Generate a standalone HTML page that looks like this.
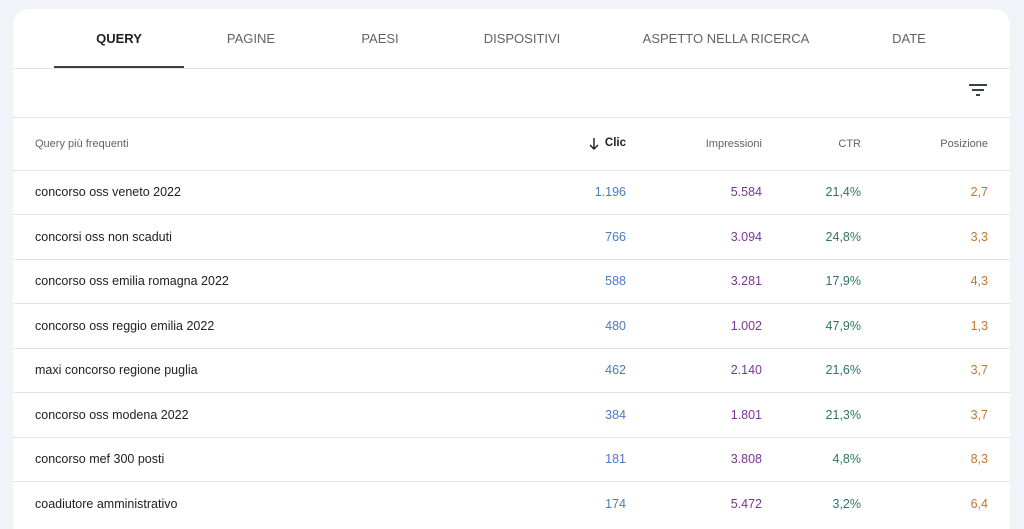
<!DOCTYPE html>
<html><head><meta charset="utf-8"><style>
body{margin:0;width:1024px;height:519px;background:#f1f3f8;font-family:"Liberation Sans",Arial,sans-serif;overflow:hidden;position:relative}
.card{position:absolute;left:13px;top:9px;width:997px;height:520px;background:#fff;border-radius:16px 16px 0 0}
.tab{position:absolute;top:22px;font-size:13px;color:#5f6368;transform:translateX(-50%);white-space:nowrap}
.ul{position:absolute;left:41px;top:57px;width:130px;height:2px;background:#3c4043}
.hl{position:absolute;left:0;width:997px;height:1px;background:#e3e4e6}
.t{position:absolute;font-size:12.5px;white-space:nowrap}
.r{transform:translateX(-100%)}
</style></head><body>
<div class="card">
<div class="tab" style="left:106px;color:#202124;font-weight:bold">QUERY</div>
<div class="tab" style="left:238px">PAGINE</div>
<div class="tab" style="left:367px">PAESI</div>
<div class="tab" style="left:509px">DISPOSITIVI</div>
<div class="tab" style="left:713px">ASPETTO NELLA RICERCA</div>
<div class="tab" style="left:896px">DATE</div>
<div class="ul"></div>
<div class="hl" style="top:59px"></div>
<svg style="position:absolute;left:956px;top:75px" width="18" height="12"><path d="M0 1h18M3 6h12M7 11h4" stroke="#3c4043" stroke-width="2"/></svg>
<div class="hl" style="top:108px"></div>
<div class="t" style="left:22px;top:129px;font-size:11px;color:#5f6368">Query più frequenti</div>
<svg style="position:absolute;left:576px;top:129px" width="10" height="12"><path d="M5 0v11M1 7l4 4 4-4" stroke="#202124" stroke-width="1.4" fill="none"/></svg>
<div class="t r" style="left:613px;top:128px;font-size:11.5px;color:#202124;font-weight:bold">Clic</div>
<div class="t r" style="left:749px;top:129px;font-size:11px;color:#5f6368">Impressioni</div>
<div class="t r" style="left:848px;top:129px;font-size:11px;color:#5f6368">CTR</div>
<div class="t r" style="left:975px;top:129px;font-size:11px;color:#5f6368">Posizione</div>
<div class="hl" style="top:161px"></div>
</div>
<div style="position:absolute;left:13px;top:9px">
<div class="t" style="left:22px;top:176px;color:#202124">concorso oss veneto 2022</div><div class="t r" style="left:613px;top:176px;color:#4a7cbf">1.196</div><div class="t r" style="left:749px;top:176px;color:#7b3596">5.584</div><div class="t r" style="left:848px;top:176px;color:#2f7468">21,4%</div><div class="t r" style="left:975px;top:176px;color:#c2772f">2,7</div>
<div class="hl" style="top:205px"></div>
<div class="t" style="left:22px;top:221px;color:#202124">concorsi oss non scaduti</div><div class="t r" style="left:613px;top:221px;color:#4a7cbf">766</div><div class="t r" style="left:749px;top:221px;color:#7b3596">3.094</div><div class="t r" style="left:848px;top:221px;color:#2f7468">24,8%</div><div class="t r" style="left:975px;top:221px;color:#c2772f">3,3</div>
<div class="hl" style="top:250px"></div>
<div class="t" style="left:22px;top:265px;color:#202124">concorso oss emilia romagna 2022</div><div class="t r" style="left:613px;top:265px;color:#4a7cbf">588</div><div class="t r" style="left:749px;top:265px;color:#7b3596">3.281</div><div class="t r" style="left:848px;top:265px;color:#2f7468">17,9%</div><div class="t r" style="left:975px;top:265px;color:#c2772f">4,3</div>
<div class="hl" style="top:294px"></div>
<div class="t" style="left:22px;top:310px;color:#202124">concorso oss reggio emilia 2022</div><div class="t r" style="left:613px;top:310px;color:#4a7cbf">480</div><div class="t r" style="left:749px;top:310px;color:#7b3596">1.002</div><div class="t r" style="left:848px;top:310px;color:#2f7468">47,9%</div><div class="t r" style="left:975px;top:310px;color:#c2772f">1,3</div>
<div class="hl" style="top:339px"></div>
<div class="t" style="left:22px;top:354px;color:#202124">maxi concorso regione puglia</div><div class="t r" style="left:613px;top:354px;color:#4a7cbf">462</div><div class="t r" style="left:749px;top:354px;color:#7b3596">2.140</div><div class="t r" style="left:848px;top:354px;color:#2f7468">21,6%</div><div class="t r" style="left:975px;top:354px;color:#c2772f">3,7</div>
<div class="hl" style="top:383px"></div>
<div class="t" style="left:22px;top:399px;color:#202124">concorso oss modena 2022</div><div class="t r" style="left:613px;top:399px;color:#4a7cbf">384</div><div class="t r" style="left:749px;top:399px;color:#7b3596">1.801</div><div class="t r" style="left:848px;top:399px;color:#2f7468">21,3%</div><div class="t r" style="left:975px;top:399px;color:#c2772f">3,7</div>
<div class="hl" style="top:428px"></div>
<div class="t" style="left:22px;top:443px;color:#202124">concorso mef 300 posti</div><div class="t r" style="left:613px;top:443px;color:#4a7cbf">181</div><div class="t r" style="left:749px;top:443px;color:#7b3596">3.808</div><div class="t r" style="left:848px;top:443px;color:#2f7468">4,8%</div><div class="t r" style="left:975px;top:443px;color:#c2772f">8,3</div>
<div class="hl" style="top:472px"></div>
<div class="t" style="left:22px;top:488px;color:#202124">coadiutore amministrativo</div><div class="t r" style="left:613px;top:488px;color:#4a7cbf">174</div><div class="t r" style="left:749px;top:488px;color:#7b3596">5.472</div><div class="t r" style="left:848px;top:488px;color:#2f7468">3,2%</div><div class="t r" style="left:975px;top:488px;color:#c2772f">6,4</div>
</div>
</body></html>
